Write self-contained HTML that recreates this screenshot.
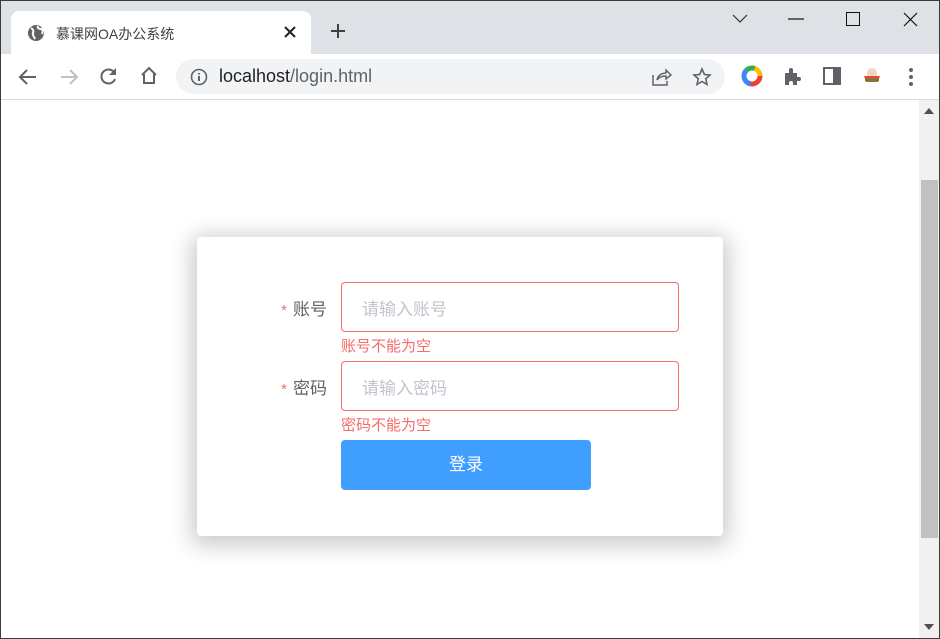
<!DOCTYPE html>
<html><head><meta charset="utf-8">
<style>
*{margin:0;padding:0;box-sizing:border-box}
html,body{width:940px;height:639px;overflow:hidden;background:#fff;font-family:"Liberation Sans","Noto Sans CJK SC",sans-serif}
.win{position:absolute;left:0;top:0;width:940px;height:639px;overflow:hidden}
.frame{position:absolute;left:0;top:0;width:940px;height:639px;border:1px solid #3c3c3c;z-index:10;pointer-events:none}
.tabs{position:absolute;left:0;top:0;width:940px;height:54px;background:#dee1e6}
.tab{position:absolute;left:11px;top:11px;width:300px;height:43px;background:#fff;border-radius:8px 8px 0 0}
.tab .t{position:absolute;left:45px;top:13px;font-size:14px;color:#3c4043}
.tb{position:absolute;left:0;top:54px;width:940px;height:46px;background:#fff;border-bottom:1px solid #dadce0}
.omni{position:absolute;left:176px;top:5px;width:549px;height:35px;background:#f1f3f4;border-radius:18px}
.url{position:absolute;left:43px;top:7px;font-size:18px;color:#202124}
.url span{color:#5f6368}
svg{position:absolute}
.sb{position:absolute;left:919px;top:100px;width:21px;height:539px;background:#f1f1f1}
.thumb{position:absolute;left:2px;top:80px;width:17px;height:358px;background:#c1c1c1}
.card{position:absolute;left:197px;top:237px;width:526px;height:299px;background:#fff;border-radius:4px;box-shadow:0 4px 22px 6px rgba(0,0,0,.2)}
.lbl{position:absolute;right:396px;font-size:17px;color:#606266;white-space:nowrap}
.lbl b{color:#f56c6c;font-weight:normal;font-size:15px;margin-right:6px}
.inp{position:absolute;left:144px;width:338px;height:50px;border:1px solid #f56c6c;border-radius:4px;font-size:17px;color:#c0c4cc;padding:12px 0 0 20px}
.err{position:absolute;left:144px;font-size:15px;color:#f56c6c}
.btn{position:absolute;left:144px;top:203px;width:250px;height:50px;background:#409eff;border-radius:4px;color:#fff;font-size:17px;text-align:center;line-height:50px}
</style></head><body>
<div class="win">
<div class="tabs">
 <div class="tab">
  <svg style="left:16px;top:13px" width="18" height="18" viewBox="0 0 18 18"><circle cx="9" cy="9" r="8" fill="#5f6368"/><path d="M4 4c2 1 3 3 2 5s1 3 2 6M11 2c-1 2 1 3 3 3s2 3 1 5" stroke="#fff" stroke-width="2" fill="none"/></svg>
  <div class="t">慕课网OA办公系统</div>
  <svg style="left:273px;top:15px" width="12" height="12" viewBox="0 0 12 12"><path d="M1 1L11 11M11 1L1 11" stroke="#202124" stroke-width="2"/></svg>
 </div>
 <svg style="left:330px;top:23px" width="16" height="16" viewBox="0 0 16 16"><path d="M8 1V15M1 8H15" stroke="#3c4043" stroke-width="2"/></svg>
 <svg style="left:732px;top:14px" width="16" height="10" viewBox="0 0 16 10"><path d="M1 1L8 8L15 1" stroke="#333" stroke-width="1.2" fill="none"/></svg>
 <svg style="left:788px;top:18px" width="16" height="2"><path d="M0 1H16" stroke="#111" stroke-width="1.2"/></svg>
 <svg style="left:846px;top:12px" width="14" height="14"><rect x=".5" y=".5" width="13" height="13" fill="none" stroke="#111"/></svg>
 <svg style="left:903px;top:12px" width="15" height="15"><path d="M1 1L14 14M14 1L1 14" stroke="#111" stroke-width="1.2"/></svg>
</div>
<div class="tb">
 <svg style="left:18px;top:13px" width="20" height="20" viewBox="0 0 20 20"><path d="M18 10H3M9 3L2 10L9 17" stroke="#5f6368" stroke-width="2" fill="none"/></svg>
 <svg style="left:59px;top:13px" width="20" height="20" viewBox="0 0 20 20"><path d="M2 10H17M11 3L18 10L11 17" stroke="#bcc0c4" stroke-width="2" fill="none"/></svg>
 <svg style="left:99px;top:12px" width="20" height="20" viewBox="0 0 20 20"><path d="M16 8A7 7 0 1 0 16 13" stroke="#5f6368" stroke-width="2" fill="none"/><path d="M17 2V9H10Z" fill="#5f6368"/></svg>
 <svg style="left:139px;top:12px" width="20" height="20" viewBox="0 0 20 20"><path d="M3 9L10 2L17 9M5 8V17H15V8" stroke="#5f6368" stroke-width="2" fill="none"/></svg>
 <div class="omni">
  <svg style="left:14px;top:9px" width="18" height="18" viewBox="0 0 18 18"><circle cx="9" cy="9" r="7.5" fill="none" stroke="#5f6368" stroke-width="1.6"/><path d="M9 8V13M9 5V6.5" stroke="#5f6368" stroke-width="2"/></svg>
  <div class="url">localhost<span>/login.html</span></div>
  <svg style="left:476px;top:9px" width="20" height="18" viewBox="0 0 20 18"><path d="M1 7V17H15V13M5 12C6 7 10 5 14 5V2L19 7L14 11V8C10 8 7 9 5 12Z" stroke="#5f6368" stroke-width="1.5" fill="none"/></svg>
  <svg style="left:516px;top:8px" width="20" height="20" viewBox="0 0 20 20"><path d="M10 2L12.4 7.5L18 8L13.7 11.8L15 17.5L10 14.5L5 17.5L6.3 11.8L2 8L7.6 7.5Z" stroke="#5f6368" stroke-width="1.6" fill="none"/></svg>
 </div>
 <svg style="left:741px;top:11px" width="22" height="22" viewBox="0 0 22 22"><circle cx="11" cy="11" r="8" fill="none" stroke="#ea4335" stroke-width="5" stroke-dasharray="17 50"/><circle cx="11" cy="11" r="8" fill="none" stroke="#4285f4" stroke-width="5" stroke-dasharray="0 14 17 50"/><circle cx="11" cy="11" r="8" fill="none" stroke="#34a853" stroke-width="5" stroke-dasharray="0 31 10 50"/><circle cx="11" cy="11" r="8" fill="none" stroke="#fbbc05" stroke-width="5" stroke-dasharray="0 40 12 50"/></svg>
 <svg style="left:783px;top:13px" width="19" height="19" viewBox="0 0 19 19"><path d="M2 6H6V3A2 2 0 0 1 10 3V6H14V10H16A2 2 0 0 1 16 14H14V18H10V16A2 2 0 0 0 6 16V18H2Z" fill="#5f6368"/></svg>
 <svg style="left:823px;top:13px" width="18" height="18"><rect x="1" y="1" width="16" height="16" fill="none" stroke="#5f6368" stroke-width="2"/><rect x="10" y="1" width="7" height="16" fill="#5f6368"/></svg>
 <svg style="left:863px;top:13px" width="18" height="18" viewBox="0 0 18 18"><circle cx="9" cy="6" r="5" fill="#f3d7c0"/><path d="M1 9H17L15 15H3Z" fill="#e04b3a"/><path d="M2 13H16" stroke="#3a9a3a" stroke-width="2"/></svg>
 <svg style="left:908px;top:13px" width="6" height="20"><circle cx="3" cy="3" r="2" fill="#5f6368"/><circle cx="3" cy="10" r="2" fill="#5f6368"/><circle cx="3" cy="17" r="2" fill="#5f6368"/></svg>
</div>
<div class="sb"><div class="thumb"></div>
 <svg style="left:5px;top:8px" width="10" height="6"><path d="M0 6L5 0L10 6Z" fill="#505050"/></svg>
 <svg style="left:5px;top:524px" width="10" height="6"><path d="M0 0L5 6L10 0Z" fill="#505050"/></svg>
</div>
<div class="card">
 <div class="lbl" style="top:58px"><b>*</b>账号</div>
 <div class="inp" style="top:45px">请输入账号</div>
 <div class="err" style="top:98px">账号不能为空</div>
 <div class="lbl" style="top:137px"><b>*</b>密码</div>
 <div class="inp" style="top:124px">请输入密码</div>
 <div class="err" style="top:177px">密码不能为空</div>
 <div class="btn">登录</div>
</div>
</div>
<div class="frame"></div>
</body></html>
